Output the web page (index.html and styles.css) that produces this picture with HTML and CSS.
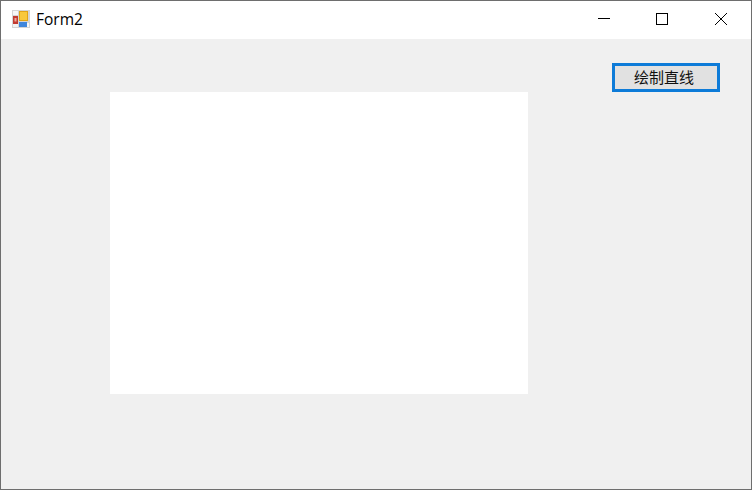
FILE: index.html
```html
<!DOCTYPE html>
<html lang="zh">
<head>
<meta charset="utf-8">
<title>Form2</title>
<link rel="stylesheet" href="styles.css">
</head>
<body>
<div class="window">
  <header class="titlebar">
    <svg class="app-icon" width="18" height="18" viewBox="0 0 18 18">
      <rect x="0" y="0" width="18" height="18" fill="#d4d4d4"/>
      <rect x="1" y="1" width="5" height="4" fill="#f6f6f6"/>
      <rect x="1" y="14" width="5" height="3" fill="#f2f2f2"/>
      <rect x="15" y="13" width="2" height="4" fill="#f6f6f6"/>
      <rect x="1" y="6" width="5" height="8" fill="#c23a30"/>
      <rect x="2.5" y="8" width="2" height="3.5" fill="#eea898"/>
      <rect x="7" y="1" width="9" height="10" fill="#e2a416"/>
      <rect x="8" y="2" width="7" height="8" fill="#f8c83c"/>
      <rect x="7" y="12" width="8" height="5" fill="#3f86dc"/>
    </svg>
    <span class="title">Form2</span>
    <div class="controls">
      <div class="control">
        <svg width="12" height="12" viewBox="0 0 12 12"><path d="M0 5.5H12" stroke="#000" fill="none"/></svg>
      </div>
      <div class="control">
        <svg width="12" height="12" viewBox="0 0 12 12"><rect x="0.5" y="0.5" width="11" height="11" stroke="#000" fill="none"/></svg>
      </div>
      <div class="control">
        <svg width="12" height="12" viewBox="0 0 12 12"><path d="M0 0L12 12M12 0L0 12" stroke="#000" stroke-width="1" fill="none"/></svg>
      </div>
    </div>
  </header>
  <main class="client">
    <div class="toolbar">
      <button class="draw-button">绘制直线</button>
    </div>
    <div class="canvas"></div>
  </main>
</div>
</body>
</html>
```

FILE: styles.css
```css
* {
  box-sizing: border-box;
}

html,
body {
  margin: 0;
  height: 100%;
  overflow: hidden;
}

.window {
  width: 752px;
  height: 490px;
  display: flex;
  flex-direction: column;
  border: 1px solid #6e6e6e;
  background: #f0f0f0;
}

.titlebar {
  height: 38px;
  flex: none;
  display: flex;
  align-items: center;
  background: #fff;
  padding-left: 11px;
}

.app-icon {
  flex: none;
  margin-top: -2px;
}

.title {
  margin: -2px 0 0 6px;
  font: 15.5px "Open Sans", "Liberation Sans", sans-serif;
  color: #000;
}

.controls {
  margin-left: auto;
  display: flex;
  height: 100%;
  padding-right: 2px;
}

.control {
  width: 58px;
  display: flex;
  align-items: center;
  justify-content: center;
  margin-top: -3px;
}

.control:last-child {
  padding-left: 2px;
}

.client {
  flex: 1;
  display: flex;
  flex-direction: column;
}

.toolbar {
  display: flex;
  justify-content: flex-end;
  padding: 24px 31px 0 0;
}

.draw-button {
  width: 108px;
  height: 29px;
  padding: 0 4px 3px 0;
  border: 3px solid #0d7bd8;
  background: #e1e1e1;
  color: #111;
  font: 15px "Noto Sans CJK SC", sans-serif;
  line-height: 1;
}

.canvas {
  width: 418px;
  height: 302px;
  margin: 0 0 0 109px;
  background: #fff;
}
```
